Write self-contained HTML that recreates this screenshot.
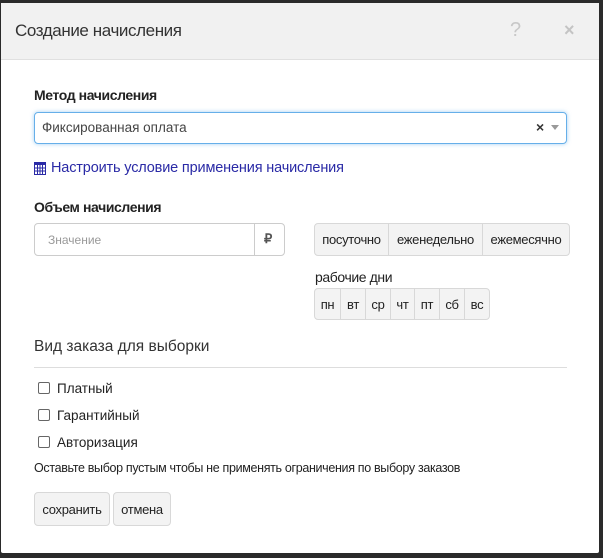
<!DOCTYPE html>
<html><head><meta charset="utf-8"><style>
*{box-sizing:border-box;margin:0;padding:0}
body{width:603px;height:558px;background:#2a2a2a;position:relative;overflow:hidden;font-family:"Liberation Sans",sans-serif;color:#222;}
.a{position:absolute;white-space:nowrap}
#dlg{position:absolute;left:1px;top:3px;width:598px;height:550px;background:#fff;border-radius:2px}
#hd{position:absolute;left:1px;top:3px;width:598px;height:57px;background:#f1f1f1;border-bottom:1px solid #e0e0e0}
.n{letter-spacing:-0.4px}
.btn{position:absolute;background:#f3f3f3;border:1px solid #d8d8d8;font-size:13px;display:flex;align-items:center;justify-content:center;letter-spacing:-0.3px}
.cb{position:absolute;left:38px;width:12px;height:12px;border:1px solid #666;border-radius:2px;background:#fff}
</style></head><body>
<div id="dlg"></div>
<div id="hd"></div>
<div class="a n" style="left:15px;top:21px;font-size:17px;color:#333">Создание начисления</div>
<div class="a" style="left:510px;top:19px;font-size:20px;color:#c8c8c8">?</div>
<div class="a" style="left:564px;top:20px;font-size:18px;color:#c4c4c4;font-weight:bold">×</div>

<div class="a n" style="left:34px;top:87px;font-size:14px;font-weight:bold">Метод начисления</div>
<div class="a" style="left:34px;top:112px;width:533px;height:32px;border:1px solid #66afe9;border-radius:4px;box-shadow:0 0 4px rgba(102,175,233,.6)"></div>
<div class="a" style="left:42px;top:120px;font-size:13.5px;color:#444">Фиксированная оплата</div>
<div class="a" style="left:536px;top:119px;font-size:14px;font-weight:bold;color:#333">×</div>
<div class="a" style="left:551px;top:125px;width:0;height:0;border-left:4px solid transparent;border-right:4px solid transparent;border-top:5px solid #999"></div>

<svg class="a" style="left:34px;top:162px" width="12" height="13" viewBox="0 0 12 13"><rect x="0.5" y="0.5" width="11" height="12" fill="none" stroke="#2a2aa6"/><rect x="0" y="0" width="12" height="3" fill="#2a2aa6"/><path d="M0 6h12M0 9h12M3.5 3v10M6 3v10M8.5 3v10" stroke="#2a2aa6"/></svg>
<div class="a" style="left:51px;top:160px;font-size:14.5px;letter-spacing:-0.16px;color:#2a2aa6">Настроить условие применения начисления</div>

<div class="a n" style="left:34px;top:199px;font-size:14px;font-weight:bold">Объем начисления</div>
<div class="a" style="left:34px;top:223px;width:251px;height:33px;border:1px solid #ccc;border-radius:4px"></div>
<div class="a" style="left:254px;top:223px;width:1px;height:33px;background:#ccc"></div>
<div class="a" style="left:48px;top:233px;font-size:12px;color:#999">Значение</div>
<div class="a" style="left:264px;top:231px;font-size:13px;font-weight:bold;color:#555">₽</div>

<div class="btn" style="left:314px;top:223px;width:75px;height:33px;border-radius:4px 0 0 4px">посуточно</div>
<div class="btn" style="left:388px;top:223px;width:95px;height:33px">еженедельно</div>
<div class="btn" style="left:482px;top:223px;width:88px;height:33px;border-radius:0 4px 4px 0">ежемесячно</div>

<div class="a n" style="left:315px;top:269px;font-size:14px">рабочие дни</div>
<div class="btn" style="left:314px;top:288px;width:27px;height:32px;border-radius:4px 0 0 4px">пн</div>
<div class="btn" style="left:340px;top:288px;width:26px;height:32px">вт</div>
<div class="btn" style="left:365px;top:288px;width:26px;height:32px">ср</div>
<div class="btn" style="left:390px;top:288px;width:25px;height:32px">чт</div>
<div class="btn" style="left:414px;top:288px;width:26px;height:32px">пт</div>
<div class="btn" style="left:439px;top:288px;width:26px;height:32px">сб</div>
<div class="btn" style="left:464px;top:288px;width:26px;height:32px;border-radius:0 4px 4px 0">вс</div>

<div class="a" style="left:34px;top:338px;font-size:15.5px;color:#333">Вид заказа для выборки</div>
<div class="a" style="left:34px;top:367px;width:533px;height:1px;background:#ddd"></div>

<div class="cb" style="top:382px"></div><div class="a" style="left:57px;top:381px;font-size:13.5px">Платный</div>
<div class="cb" style="top:409px"></div><div class="a" style="left:57px;top:408px;font-size:13.5px">Гарантийный</div>
<div class="cb" style="top:436px"></div><div class="a" style="left:57px;top:435px;font-size:13.5px">Авторизация</div>
<div class="a" style="left:34px;top:461px;font-size:12.5px;letter-spacing:-0.33px">Оставьте выбор пустым чтобы не применять ограничения по выбору заказов</div>

<div class="btn" style="left:34px;top:492px;width:76px;height:34px;border-radius:4px">сохранить</div>
<div class="btn" style="left:113px;top:492px;width:58px;height:34px;border-radius:4px">отмена</div>
</body></html>
